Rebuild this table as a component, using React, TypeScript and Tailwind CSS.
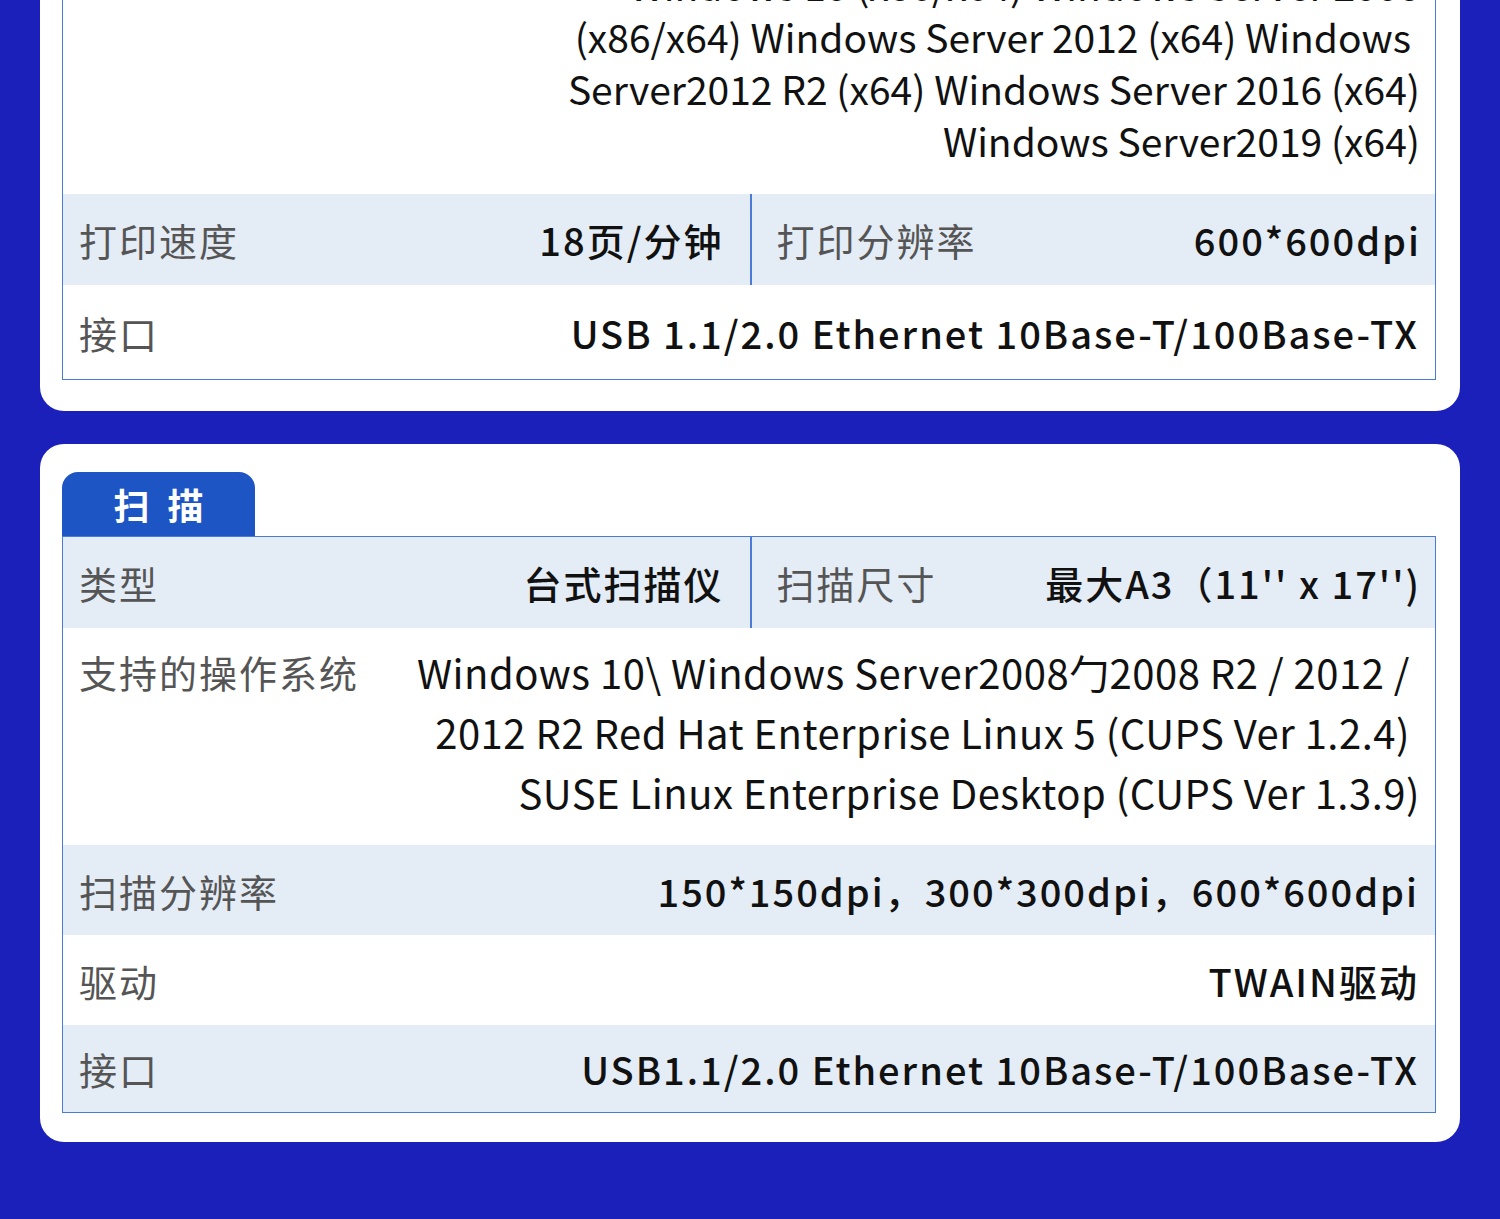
import React from "react";

const font = { fontFamily: '"Noto Sans CJK SC", "Noto Sans", sans-serif' };

type Pair = { label: string; value: string };

function HalfRow({ left, right }: { left: Pair; right: Pair }) {
  return (
    <div className="flex h-[91px] bg-[#e4ecf5]">
      <div className="flex flex-1 items-center justify-between pl-[16px] pr-[26px]">
        <span className="whitespace-nowrap text-[38px] tracking-[2px] text-[#555]">{left.label}</span>
        <span className="whitespace-nowrap text-[38px] font-medium tracking-[2px] text-[#111]">{left.value}</span>
      </div>
      <div className="w-[2px] bg-[#4a7bd6]" />
      <div className="flex flex-1 items-center justify-between pl-[25px] pr-[14px]">
        <span className="whitespace-nowrap text-[38px] tracking-[2px] text-[#555]">{right.label}</span>
        <span className="whitespace-nowrap text-[38px] font-medium tracking-[2px] text-[#111]">{right.value}</span>
      </div>
    </div>
  );
}

function Row({ label, value, shade, h }: { label: string; value: string; shade?: boolean; h: string }) {
  return (
    <div className={`flex items-center justify-between pl-[16px] pr-[16px] ${h} ${shade ? "bg-[#e4ecf5]" : "bg-white"}`}>
      <span className="whitespace-nowrap text-[38px] tracking-[2px] text-[#555]">{label}</span>
      <span className="whitespace-nowrap text-[38px] font-medium tracking-[2px] text-[#111]">{value}</span>
    </div>
  );
}

export default function App() {
  return (
    <div className="h-[1219px] w-[1500px] overflow-hidden bg-[#1b20bb]" style={font}>
      {/* print card, top cut off */}
      <div className="mx-[40px] -mt-[112px] rounded-b-[24px] bg-white pl-[22px] pr-[24px] pb-[31px]">
        <div className="border border-[#4a7bd6]">
          <div className="flex justify-between bg-white pl-[16px] pr-[15px] pt-[17px] pb-[28px]">
            <span className="shrink-0 whitespace-nowrap text-[38px] leading-[52px] tracking-[2px] text-[#555]">支持的操作系统</span>
            <div className="whitespace-nowrap text-right text-[39px] leading-[52px] text-[#111]">
              <div>Windows 7 (x86/x64) Windows 8.1 (x86/x64)</div>
              <div>Windows 10 (x86/x64) Windows Server 2008</div>
              <div className="pr-[9px]">(x86/x64) Windows Server 2012 (x64) Windows</div>
              <div>Server2012 R2 (x64) Windows Server 2016 (x64)</div>
              <div>Windows Server2019 (x64)</div>
            </div>
          </div>
          <HalfRow left={{ label: "打印速度", value: "18页/分钟" }} right={{ label: "打印分辨率", value: "600*600dpi" }} />
          <Row label="接口" value="USB 1.1/2.0 Ethernet 10Base-T/100Base-TX" h="h-[94px]" />
        </div>
      </div>

      {/* scan card */}
      <div className="mx-[40px] mt-[33px] rounded-[24px] bg-white pl-[22px] pr-[24px] pt-[28px] pb-[29px]">
        <div className="flex h-[64px] w-[193px] items-center justify-center rounded-t-[16px] bg-[#1d56c4] text-[36px] font-bold tracking-[18px] text-white">
          <span className="pl-[18px]">扫描</span>
        </div>
        <div className="border border-[#4a7bd6]">
          <HalfRow left={{ label: "类型", value: "台式扫描仪" }} right={{ label: "扫描尺寸", value: "最大A3（11'' x 17'')" }} />
          <div className="flex h-[217px] justify-between bg-white pl-[16px] pr-[15px] pt-[14px]">
            <span className="shrink-0 whitespace-nowrap text-[38px] leading-[60px] tracking-[2px] text-[#555]">支持的操作系统</span>
            <div className="whitespace-nowrap text-right text-[40px] leading-[60px] tracking-[0.5px] text-[#111]">
              <div className="pr-[10px]">Windows 10\ Windows Server2008勹2008 R2 / 2012 /</div>
              <div className="pr-[10px]">2012 R2 Red Hat Enterprise Linux 5 (CUPS Ver 1.2.4)</div>
              <div>SUSE Linux Enterprise Desktop (CUPS Ver 1.3.9)</div>
            </div>
          </div>
          <Row label="扫描分辨率" value="150*150dpi，300*300dpi，600*600dpi" shade h="h-[90px]" />
          <Row label="驱动" value="TWAIN驱动" h="h-[90px]" />
          <Row label="接口" value="USB1.1/2.0 Ethernet 10Base-T/100Base-TX" shade h="h-[87px]" />
        </div>
      </div>
    </div>
  );
}
